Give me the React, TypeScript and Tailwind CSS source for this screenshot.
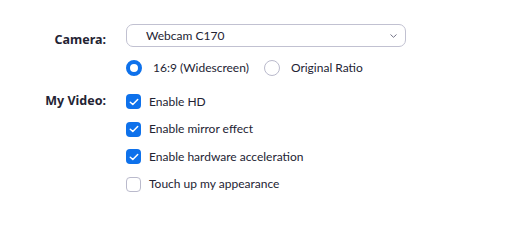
import React from 'react';

const Check = ({ checked, label }: { checked: boolean; label: string }) => (
    <div className="flex h-[27.5px] items-center">
        {checked ? (
            <div className="flex h-[15px] w-[15px] items-center justify-center rounded-[4px] bg-[#0e71eb]">
                <svg width="10" height="8" viewBox="0 0 10 8" fill="none">
                    <path d="M1.3 4.2 L3.8 6.5 L8.7 1.5" stroke="white" strokeWidth="1.5" strokeLinecap="round" strokeLinejoin="round" />
                </svg>
            </div>
        ) : (
            <div className="h-[15px] w-[15px] rounded-[4px] border border-[#babacc] bg-white" />
        )}
        <span className="ml-[8px] font-['Lato',sans-serif] text-[12px] text-[#232333]">{label}</span>
    </div>
);

const Radio = ({ selected, label }: { selected: boolean; label: string }) => (
    <div className="flex items-center">
        {selected ? (
            <div className="h-[16px] w-[16px] rounded-full border-[4px] border-[#0e71eb] bg-white" />
        ) : (
            <div className="h-[16px] w-[16px] rounded-full border border-[#babacc] bg-white" />
        )}
        <span className="ml-[11px] font-['Lato',sans-serif] text-[12px] text-[#232333]">{label}</span>
    </div>
);

const App: React.FC = () => {
    return (
        <div className="h-[206px] w-[527px] bg-white pt-[24px] font-['Noto_Sans',sans-serif]">
            <div className="flex">
                <div className="w-[106px] pt-[7px] text-right text-[12.5px] font-bold leading-[18px] text-[#232333]">Camera:</div>
                <div className="ml-[20px] flex h-[23px] w-[280px] items-center justify-between rounded-[7px] border border-[#c1c1d1] pl-[19px] pr-[8px]">
                    <span className="font-['Lato',sans-serif] text-[12px] text-[#232333]">Webcam C170</span>
                    <svg width="7" height="4" viewBox="0 0 7 4" fill="none">
                        <path d="M0.5 0.5 L3.5 3.3 L6.5 0.5" stroke="#747487" strokeWidth="1" />
                    </svg>
                </div>
            </div>
            <div className="ml-[126px] mt-[11px] flex h-[16px] items-center gap-[15px]">
                <Radio selected label="16:9 (Widescreen)" />
                <Radio selected={false} label="Original Ratio" />
            </div>
            <div className="mt-[12px] flex">
                <div className="w-[106px] pt-[4px] text-right text-[12.5px] font-bold leading-[18px] text-[#232333]">My Video:</div>
                <div className="ml-[20px] flex flex-col">
                    <Check checked label="Enable HD" />
                    <Check checked label="Enable mirror effect" />
                    <Check checked label="Enable hardware acceleration" />
                    <Check checked={false} label="Touch up my appearance" />
                </div>
            </div>
        </div>
    );
};

export default App;
